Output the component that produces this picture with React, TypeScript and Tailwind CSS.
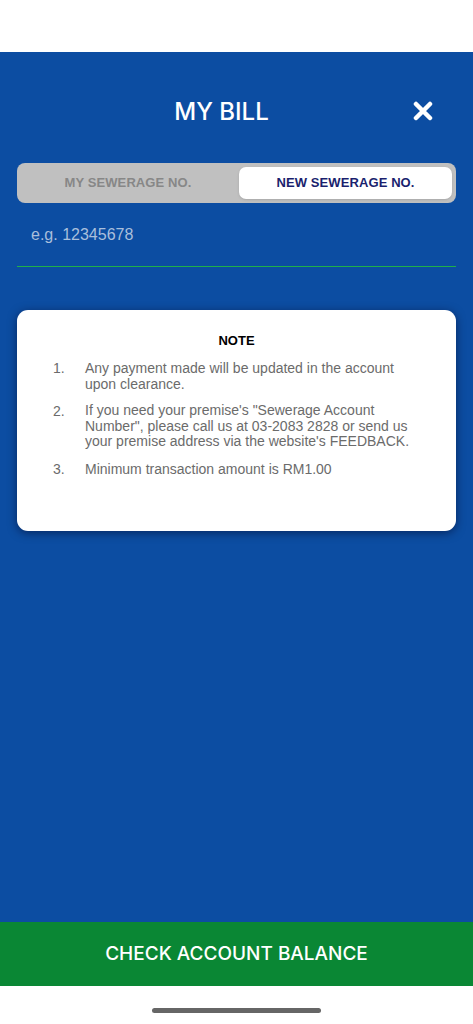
import React from "react";

export default function App() {
  const items = [
    "Any payment made will be updated in the account upon clearance.",
    "If you need your premise's \"Sewerage Account Number\", please call us at 03-2083 2828 or send us your premise address via the website's FEEDBACK.",
    "Minimum transaction amount is RM1.00",
  ];
  return (
    <div
      className="w-[473px] h-[1024px] flex flex-col bg-white overflow-hidden"
      style={{ fontFamily: '"Liberation Sans", Arial, sans-serif' }}
    >
      <div className="h-[52px] bg-white shrink-0" />
      <div className="flex-1 bg-[#0c4da2] flex flex-col px-[17px]">
        <div className="relative h-[118px] flex items-center justify-center pt-[2px] pr-[30px]">
          <h1
            className="text-white text-[24px] font-medium"
            style={{ fontFamily: 'Inter, "Liberation Sans", sans-serif' }}
          >
            MY BILL
          </h1>
          <button className="absolute right-[23px] top-[49px] w-[20px] h-[20px] text-white">
            <svg viewBox="0 0 20 20" width="20" height="20">
              <path d="M3 3 L17 17 M17 3 L3 17" stroke="white" strokeWidth="4.5" strokeLinecap="round" />
            </svg>
          </button>
        </div>
        <div className="h-[40px] rounded-[8px] bg-[#c0c0c0] flex p-[4px] gap-[4px] mt-[-7px]">
          <div className="flex-1 flex items-center justify-center text-[13px] font-bold text-[#878787] tracking-[0.1px]">
            MY SEWERAGE NO.
          </div>
          <div className="w-[213px] rounded-[7px] bg-white flex items-center justify-center text-[13px] font-bold text-[#1a1f6e] tracking-[0.1px] shadow-sm">
            NEW SEWERAGE NO.
          </div>
        </div>
        <div className="h-[63px] flex items-center pl-[14px] pt-[1px]">
          <span className="text-[16px] text-[#a9bfdc]">e.g. 12345678</span>
        </div>
        <div className="h-[1px] bg-[#1fb04a]" />
        <div className="mt-[43px] h-[221px] rounded-[11px] bg-white shadow-[0_2px_10px_rgba(0,0,30,0.5)] pt-[23px] px-[36px]">
          <div className="text-center text-[13px] font-bold text-black leading-[16px]">NOTE</div>
          <ol className="mt-[11px] flex flex-col gap-[11px]">
            {items.map((t, i) => (
              <li key={i} className="flex text-[14px] leading-[16px] text-[#6b6b6b]">
                <span className="w-[32px] shrink-0">{i + 1}.</span>
                <span className={i === 1 ? "leading-[15.5px]" : ""}>{t}</span>
              </li>
            ))}
          </ol>
        </div>
      </div>
      <div className="h-[64px] bg-[#0a8734] flex items-center justify-center shrink-0">
        <span
          className="text-white text-[19px] font-medium"
          style={{ fontFamily: 'Inter, "Liberation Sans", sans-serif' }}
        >
          CHECK ACCOUNT BALANCE
        </span>
      </div>
      <div className="h-[38px] bg-white flex items-start justify-center pt-[22px] shrink-0">
        <div className="w-[169px] h-[5px] rounded-full bg-[#666666]" />
      </div>
    </div>
  );
}
